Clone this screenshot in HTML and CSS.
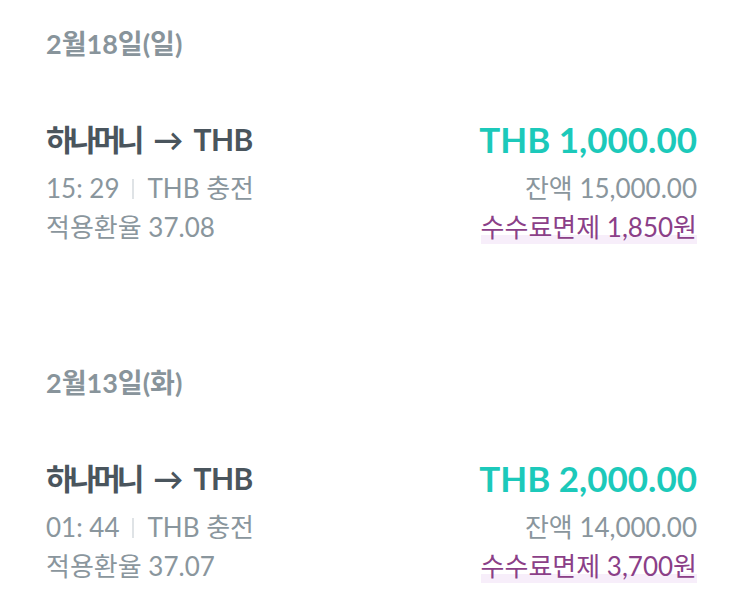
FILE: index.html
```html
<!DOCTYPE html>
<html lang="ko">
<head>
<meta charset="utf-8">
<link rel="stylesheet" href="styles.css">
</head>
<body>
<main class="list">
  <section class="day">
    <h2 class="day-title">2월18일(일)</h2>
    <div class="tx">
      <div class="tx-left">
        <div class="tx-title"><span class="ko">하나머니</span> <span class="arrow">→</span> THB</div>
        <div class="meta"><span>15: 29</span><span class="sep"></span><span>THB 충전</span></div>
        <div class="meta">적용환율 37.08</div>
      </div>
      <div class="tx-right">
        <div class="amount">THB 1,000.00</div>
        <div class="meta">잔액 15,000.00</div>
        <div class="meta"><span class="fee">수수료면제 1,850원</span></div>
      </div>
    </div>
  </section>
  <section class="day">
    <h2 class="day-title">2월13일(화)</h2>
    <div class="tx">
      <div class="tx-left">
        <div class="tx-title"><span class="ko">하나머니</span> <span class="arrow">→</span> THB</div>
        <div class="meta"><span>01: 44</span><span class="sep"></span><span>THB 충전</span></div>
        <div class="meta">적용환율 37.07</div>
      </div>
      <div class="tx-right">
        <div class="amount">THB 2,000.00</div>
        <div class="meta">잔액 14,000.00</div>
        <div class="meta"><span class="fee">수수료면제 3,700원</span></div>
      </div>
    </div>
  </section>
</main>
</body>
</html>
```

FILE: styles.css
```css
html, body {
  margin: 0;
  padding: 0;
  background: #ffffff;
}
body {
  font-family: "Lato", "Noto Sans CJK KR", sans-serif;
}
.list {
  padding: 0 46px;
}
.day {
  padding: 29px 0 92px;
}
.day:last-child {
  padding-bottom: 20px;
}
.day-title {
  margin: 0;
  font-size: 27px;
  line-height: 30px;
  font-weight: 700;
  color: #88949b;
}
.tx {
  margin-top: 60px;
  display: flex;
  justify-content: space-between;
}
.tx-left, .tx-right {
  display: flex;
  flex-direction: column;
}
.tx-right {
  align-items: flex-end;
}
.tx-title {
  font-size: 30px;
  line-height: 40px;
  font-weight: 700;
  color: #4a555d;
  letter-spacing: -0.5px;
  margin-bottom: 10px;
}
.tx-title .ko {
  letter-spacing: -4px;
  margin-right: 6px;
}
.tx-title .arrow {
  margin-right: 4px;
}
.amount {
  font-size: 35px;
  line-height: 40px;
  font-weight: 700;
  color: #1cc9ba;
  margin-bottom: 10px;
}
.meta {
  font-size: 26px;
  line-height: 39px;
  color: #8a969d;
  display: flex;
  align-items: center;
}
.sep {
  display: inline-block;
  width: 2px;
  height: 20px;
  background: #dfe3e6;
  margin: 0 13px;
}
.fee {
  color: #8b3f88;
  background: linear-gradient(to bottom, transparent 70%, #f7eefa 70%, #f7eefa 93%, transparent 93%);
}
```
